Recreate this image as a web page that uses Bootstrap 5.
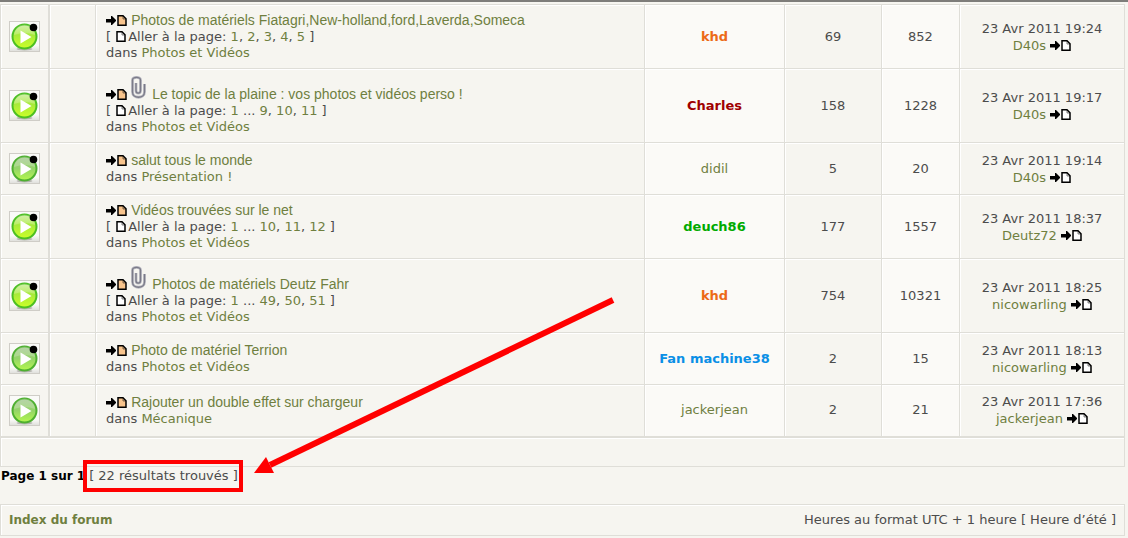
<!DOCTYPE html>
<html lang="fr">
<head>
<meta charset="utf-8">
<meta name="viewport" content="width=device-width, initial-scale=1">
<title>Résultats de la recherche</title>
<link href="https://cdn.jsdelivr.net/npm/bootstrap@5.3.0/dist/css/bootstrap.min.css" rel="stylesheet">
<style>
body{background:#f6f5f0;color:#4c4c4c;font:13px/16px "DejaVu Sans",Verdana,sans-serif;border-top:2px solid #7e7d7a}
a{color:#6f7f3f;text-decoration:none}
a:hover{text-decoration:underline}
.page-wrap{padding:2px 3px 0 0}
.topics{table-layout:fixed;border-collapse:collapse;width:100%}
.topics td{border:1px solid #dfded8;box-shadow:inset 1px 1px #fff;height:52px;padding:7px 4px;text-align:center;vertical-align:middle}
.topics .c-title{text-align:left;padding:7px 10px}
.topics .c-icon{padding:0;border-right-width:2px}
.topics .c-icon svg{display:block;margin:0 auto}
.topics .c-light{background:#fbfaf7}
.topics td:last-child{line-height:17px}
.topics tfoot td{height:30px;padding:0;border-top-width:2px}
.w-icon{width:48px}.w-gap{width:47px}.w-author{width:140px}.w-replies{width:97px}.w-views{width:78px}.w-last{width:165px}
.t-link{font:14px/17px "Liberation Sans",Arial,sans-serif}
.t-line{line-height:17px}
.topics svg{display:inline-block;vertical-align:-1px}
.topics .clip-icon{margin:0 2px 0 4px;vertical-align:0}
.topics .page-icon{margin:0 2px 0 1px}
.orange{color:#ec6a17}.darkred{color:#a00000}.green{color:#00aa00}.blue{color:#0a8fe6}
.page-info{padding:1px 0 0 1px;color:#000}
.page-info strong,.crumbs a{font-size:12px}
.found{color:#4c4c4c;margin-left:4px}
.found::after{content:"";position:absolute;inset:-8px -5px -8px -6px;border:4px solid #f00}
.pointer{position:absolute;left:165px;top:-171px;z-index:1;pointer-events:none}
.crumbs{margin-top:20px;border:1px solid #dfded8;box-shadow:inset 1px 1px #fff;padding:7px 8px}
</style>
</head>
<body>
<svg width="0" height="0" class="position-absolute" aria-hidden="true">
  <defs>
    <linearGradient id="gNew" x1="0" y1="0" x2="0" y2="1"><stop offset="0" stop-color="#c9ec98"/><stop offset=".45" stop-color="#a8ea3a"/><stop offset="1" stop-color="#ccff28"/></linearGradient>
    <linearGradient id="gOld" x1="0" y1="0" x2="0" y2="1"><stop offset="0" stop-color="#a5c794"/><stop offset=".5" stop-color="#95d468"/><stop offset="1" stop-color="#b2f84e"/></linearGradient>
    <linearGradient id="gBox" x1="0" y1="0" x2="0" y2="1"><stop offset=".8" stop-color="#fafaf8"/><stop offset="1" stop-color="#dededa"/></linearGradient>
    <symbol id="frame" viewBox="0 0 31 31"><rect x=".5" y=".5" width="30" height="30" fill="url(#gBox)" stroke="#cfcdc7"/><ellipse cx="15.500" cy="28" rx="8" ry="1.500" fill="#b4b5ae"/></symbol>
    <symbol id="play" viewBox="0 0 31 31"><path d="M11.500 9.500v13L22.500 16z" fill="#fff"/><path d="M5 14a10.500 10.500 0 0 1 21 0q-10-4-21 0z" fill="#fff" opacity=".2"/></symbol>
    <symbol id="hot" viewBox="0 0 31 31"><use href="#frame"/><circle cx="15.500" cy="15.500" r="12" fill="url(#gNew)" stroke="#4cbf22" stroke-width="2"/><use href="#play"/><circle cx="24.500" cy="6.500" r="3.800"/></symbol>
    <symbol id="mine" viewBox="0 0 31 31"><use href="#frame"/><circle cx="15.500" cy="15.500" r="12" fill="url(#gOld)" stroke="#4eaf30" stroke-width="2"/><use href="#play"/><circle cx="24.500" cy="6.500" r="3.800"/></symbol>
    <symbol id="plain" viewBox="0 0 31 31"><use href="#frame"/><circle cx="15.500" cy="15.500" r="12" fill="url(#gOld)" stroke="#4eaf30" stroke-width="2"/><use href="#play"/></symbol>
    <symbol id="arrow" viewBox="0 0 10 11"><path d="M0 4h5V1h1l4 4v1L6 10H5V7.500H0z"/></symbol>
    <symbol id="doc" viewBox="0 0 10 11"><path d="M1 .8h5l3 3v6.400H1z" stroke="#000" stroke-width="1.500"/><path d="M6 1v3h3" fill="none" stroke="#000" stroke-width=".5"/></symbol>
    <symbol id="newest" viewBox="0 0 21 11"><use href="#arrow" width="10" height="11"/><use href="#doc" x="11" width="10" height="11" fill="#f8c48c"/></symbol>
    <symbol id="latest" viewBox="0 0 21 11"><use href="#arrow" width="10" height="11"/><use href="#doc" x="11" width="10" height="11" fill="#fff"/></symbol>
    <symbol id="clip" viewBox="0 0 15 23"><path d="M5 7v7.500c0 3.500 4.500 3.500 4.500 0V4c0-3.500-8-3.500-8 0v12c0 7 12 7 12 0V8" fill="none" stroke="#b9b9c2" stroke-width="2.800"/><path d="M5 7v7.500c0 3.500 4.500 3.500 4.500 0V4c0-3.500-8-3.500-8 0v12c0 7 12 7 12 0V8" fill="none" stroke="#7b7b88" stroke-width="1.300"/></symbol>
  </defs>
</svg>
<main class="page-wrap">
  <table class="topics">
    <colgroup><col class="w-icon"><col class="w-gap"><col><col class="w-author"><col class="w-replies"><col class="w-views"><col class="w-last"></colgroup>
    <tbody>
      <tr>
        <td class="c-icon"><svg width="31" height="31"><use href="#hot"/></svg></td><td></td>
        <td class="c-title"><div class="t-line"><svg width="21" height="11"><use href="#newest"/></svg> <a class="t-link" href="#">Photos de matériels Fiatagri,New-holland,ford,Laverda,Someca</a></div>
          <div>[ <svg class="page-icon" width="10" height="11"><use href="#doc" fill="#fff"/></svg>Aller à la page: <a href="#">1</a>, <a href="#">2</a>, <a href="#">3</a>, <a href="#">4</a>, <a href="#">5</a> ]</div>
          <div>dans <a href="#">Photos et Vidéos</a></div></td>
        <td class="c-light"><a class="orange fw-bold" href="#">khd</a></td><td>69</td><td class="c-light">852</td>
        <td>23 Avr 2011 19:24<br><a href="#">D40s</a> <svg width="21" height="11"><use href="#latest"/></svg></td>
      </tr>
      <tr>
        <td class="c-icon"><svg width="31" height="31"><use href="#hot"/></svg></td><td></td>
        <td class="c-title"><div class="t-line"><svg width="21" height="11"><use href="#newest"/></svg><svg class="clip-icon" width="15" height="23"><use href="#clip"/></svg> <a class="t-link" href="#">Le topic de la plaine : vos photos et vidéos perso !</a></div>
          <div>[ <svg class="page-icon" width="10" height="11"><use href="#doc" fill="#fff"/></svg>Aller à la page: <a href="#">1</a> ... <a href="#">9</a>, <a href="#">10</a>, <a href="#">11</a> ]</div>
          <div>dans <a href="#">Photos et Vidéos</a></div></td>
        <td class="c-light"><a class="darkred fw-bold" href="#">Charles</a></td><td>158</td><td class="c-light">1228</td>
        <td>23 Avr 2011 19:17<br><a href="#">D40s</a> <svg width="21" height="11"><use href="#latest"/></svg></td>
      </tr>
      <tr>
        <td class="c-icon"><svg width="31" height="31"><use href="#mine"/></svg></td><td></td>
        <td class="c-title"><div class="t-line"><svg width="21" height="11"><use href="#newest"/></svg> <a class="t-link" href="#">salut tous le monde</a></div>
          <div>dans <a href="#">Présentation !</a></div></td>
        <td class="c-light"><a href="#">didil</a></td><td>5</td><td class="c-light">20</td>
        <td>23 Avr 2011 19:14<br><a href="#">D40s</a> <svg width="21" height="11"><use href="#latest"/></svg></td>
      </tr>
      <tr>
        <td class="c-icon"><svg width="31" height="31"><use href="#hot"/></svg></td><td></td>
        <td class="c-title"><div class="t-line"><svg width="21" height="11"><use href="#newest"/></svg> <a class="t-link" href="#">Vidéos trouvées sur le net</a></div>
          <div>[ <svg class="page-icon" width="10" height="11"><use href="#doc" fill="#fff"/></svg>Aller à la page: <a href="#">1</a> ... <a href="#">10</a>, <a href="#">11</a>, <a href="#">12</a> ]</div>
          <div>dans <a href="#">Photos et Vidéos</a></div></td>
        <td class="c-light"><a class="green fw-bold" href="#">deuch86</a></td><td>177</td><td class="c-light">1557</td>
        <td>23 Avr 2011 18:37<br><a href="#">Deutz72</a> <svg width="21" height="11"><use href="#latest"/></svg></td>
      </tr>
      <tr>
        <td class="c-icon"><svg width="31" height="31"><use href="#hot"/></svg></td><td></td>
        <td class="c-title"><div class="t-line"><svg width="21" height="11"><use href="#newest"/></svg><svg class="clip-icon" width="15" height="23"><use href="#clip"/></svg> <a class="t-link" href="#">Photos de matériels Deutz Fahr</a></div>
          <div>[ <svg class="page-icon" width="10" height="11"><use href="#doc" fill="#fff"/></svg>Aller à la page: <a href="#">1</a> ... <a href="#">49</a>, <a href="#">50</a>, <a href="#">51</a> ]</div>
          <div>dans <a href="#">Photos et Vidéos</a></div></td>
        <td class="c-light"><a class="orange fw-bold" href="#">khd</a></td><td>754</td><td class="c-light">10321</td>
        <td>23 Avr 2011 18:25<br><a href="#">nicowarling</a> <svg width="21" height="11"><use href="#latest"/></svg></td>
      </tr>
      <tr>
        <td class="c-icon"><svg width="31" height="31"><use href="#mine"/></svg></td><td></td>
        <td class="c-title"><div class="t-line"><svg width="21" height="11"><use href="#newest"/></svg> <a class="t-link" href="#">Photo de matériel Terrion</a></div>
          <div>dans <a href="#">Photos et Vidéos</a></div></td>
        <td class="c-light"><a class="blue fw-bold" href="#">Fan machine38</a></td><td>2</td><td class="c-light">15</td>
        <td>23 Avr 2011 18:13<br><a href="#">nicowarling</a> <svg width="21" height="11"><use href="#latest"/></svg></td>
      </tr>
      <tr>
        <td class="c-icon"><svg width="31" height="31"><use href="#plain"/></svg></td><td></td>
        <td class="c-title"><div class="t-line"><svg width="21" height="11"><use href="#newest"/></svg> <a class="t-link" href="#">Rajouter un double effet sur chargeur</a></div>
          <div>dans <a href="#">Mécanique</a></div></td>
        <td class="c-light"><a href="#">jackerjean</a></td><td>2</td><td class="c-light">21</td>
        <td>23 Avr 2011 17:36<br><a href="#">jackerjean</a> <svg width="21" height="11"><use href="#latest"/></svg></td>
      </tr>
    </tbody>
    <tfoot><tr><td colspan="7"></td></tr></tfoot>
  </table>
  <div class="page-info d-flex"><strong>Page 1 sur 1</strong><span class="found position-relative">[ 22 résultats trouvés ]<svg class="pointer" width="364" height="178" viewBox="0 0 364 178" aria-hidden="true"><path d="M359 3L16 168" fill="none" stroke="#f00" stroke-width="6"/><path d="M0 176L12 160L20 176z" fill="#f00"/></svg></span></div>
  <footer class="crumbs d-flex justify-content-between"><a class="fw-bold" href="#">Index du forum</a><span>Heures au format UTC + 1 heure [ Heure d’été ]</span></footer>
</main>
<script src="https://cdn.jsdelivr.net/npm/bootstrap@5.3.0/dist/js/bootstrap.bundle.min.js"></script>
</body>
</html>
